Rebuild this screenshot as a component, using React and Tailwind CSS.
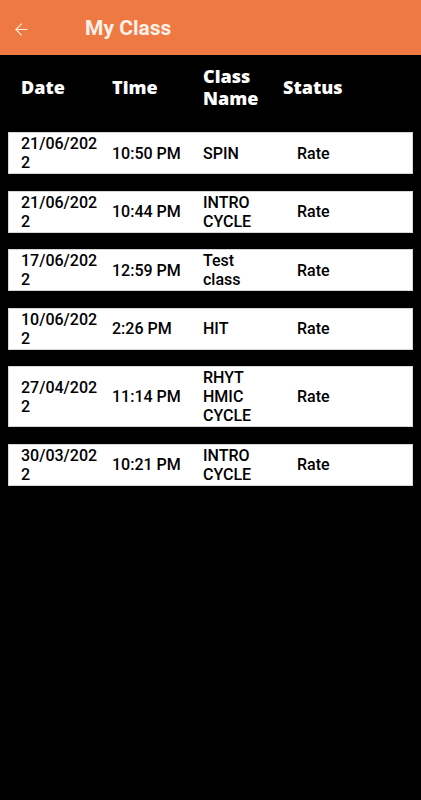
import { ArrowLeft } from "lucide-react";

const classes = [
  { date: "21/06/2022", time: "10:50 PM", name: "SPIN" },
  { date: "21/06/2022", time: "10:44 PM", name: "INTRO CYCLE" },
  { date: "17/06/2022", time: "12:59 PM", name: "Test class" },
  { date: "10/06/2022", time: "2:26 PM", name: "HIT" },
  { date: "27/04/2022", time: "11:14 PM", name: "RHYTHMIC CYCLE" },
  { date: "30/03/2022", time: "10:21 PM", name: "INTRO CYCLE" },
];

export default function App() {
  return (
    <div className="min-h-[800px] w-full bg-black font-['Roboto',sans-serif]">
      {/* Top bar */}
      <div className="flex h-[55px] items-center bg-[#ee7943] pt-[3px]">
        <button className="ml-[9px] flex h-6 w-6 items-center justify-center text-[#fbe9dd]">
          <ArrowLeft className="h-[19px] w-[19px]" strokeWidth={1.4} />
        </button>
        <h1 className="ml-[52px] text-[21px] font-bold text-[#fdf1e9]">My Class</h1>
      </div>

      {/* Column headings */}
      <div className="grid h-[77px] grid-cols-[91px_91px_80px_1fr] items-center px-[21px] pb-[14px] font-['Open_Sans',sans-serif] text-[18px] font-extrabold leading-[22px] text-white">
        <span>Date</span>
        <span>Time</span>
        <span className="w-[60px]">Class Name</span>
        <span>Status</span>
      </div>

      {/* Rows */}
      <div className="flex flex-col gap-[16.5px] px-2">
        {classes.map((c, i) => (
          <div
            key={i}
            className="grid grid-cols-[91px_91px_94px_1fr] items-center border border-[#d6d6d6] bg-white px-[12px] py-[1px] text-[16px] font-medium leading-[19px] text-black"
          >
            <span className="w-[80px] break-all">{c.date}</span>
            <span>{c.time}</span>
            <span className="w-[50px] break-words">{c.name}</span>
            <span>Rate</span>
          </div>
        ))}
      </div>
    </div>
  );
}
